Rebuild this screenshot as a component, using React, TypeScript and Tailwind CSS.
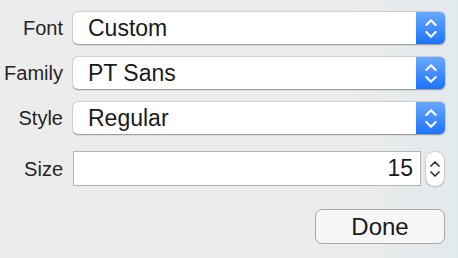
import React from 'react'

const FONT = { fontFamily: '"Liberation Sans", Arial, sans-serif' }

function Chevrons({ color, w, h, sw = 1.8 }: { color: string; w: number; h: number; sw?: number }) {
  return (
    <svg width={w} height={h} viewBox="0 0 10 18" fill="none" stroke={color} strokeWidth={sw} strokeLinecap="round" strokeLinejoin="round">
      <path d="M1 6 L5 2 L9 6" />
      <path d="M1 12 L5 16 L9 12" />
    </svg>
  )
}

function Popup({ label, value }: { label: string; value: string }) {
  return (
    <div className="flex items-center h-[32px]">
      <div className="w-[63px] text-right text-[20px] text-[#262626] leading-none">{label}</div>
      <div className="ml-[10px] w-[372px] h-full flex bg-white rounded-[5px] shadow-[0_0.5px_1.5px_rgba(0,0,0,0.35),0_0_0_0.5px_rgba(0,0,0,0.12)]">
        <div className="flex-1 flex items-center pl-[15px] text-[23px] text-[#1a1a1a] leading-none">{value}</div>
        <div className="w-[29px] h-full flex items-center justify-center rounded-r-[5px] bg-[linear-gradient(to_bottom,#69a8ff,#1c74fe)]">
          <Chevrons color="#ffffff" w={12} h={21} />
        </div>
      </div>
    </div>
  )
}

export default function App() {
  return (
    <div className="w-[458px] h-[258px] overflow-hidden bg-[linear-gradient(to_right,#ececec_0%,#ececec_75%,#e2e9ec_100%)]" style={FONT}>
      <div className="pt-[12px] flex flex-col gap-[13px]">
        <Popup label="Font" value="Custom" />
        <Popup label="Family" value="PT Sans" />
        <Popup label="Style" value="Regular" />
      </div>

      <div className="mt-[17px] flex items-center h-[35px]">
        <div className="w-[63px] text-right text-[20px] text-[#262626] leading-none">Size</div>
        <div className="ml-[10px] w-[348px] h-full flex items-center justify-end pr-[7px] bg-white border border-[#b3b3b3] text-[23px] text-[#1a1a1a] leading-none">
          15
        </div>
        <div className="ml-[5px] w-[18px] h-[34px] flex items-center justify-center bg-white rounded-[8px] shadow-[0_0.5px_1.5px_rgba(0,0,0,0.35),0_0_0_0.5px_rgba(0,0,0,0.12)]">
          <Chevrons color="#333333" w={10} h={24} sw={1.7} />
        </div>
      </div>

      <div className="mt-[23px] flex justify-end pr-[13px]">
        <button className="w-[130px] h-[35px] rounded-[7px] border-[1.5px] border-[#a9a9a9] bg-[#f6f6f6] text-[24px] text-[#1a1a1a] leading-none">
          Done
        </button>
      </div>
    </div>
  )
}
